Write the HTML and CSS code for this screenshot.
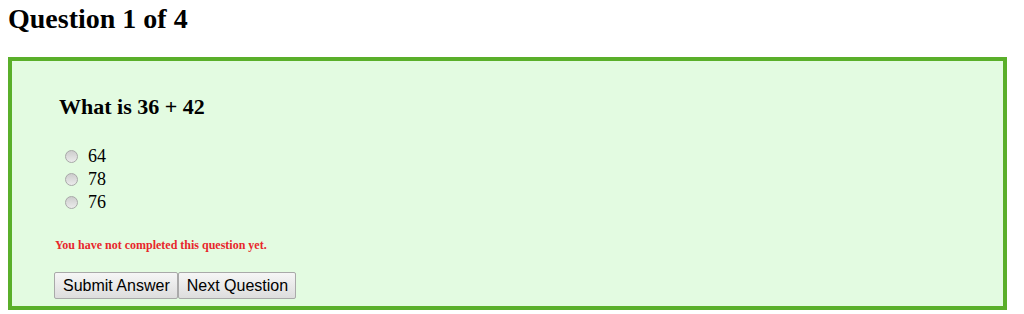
FILE: index.html
```html
<!DOCTYPE html>
<html lang="en">
<head>
    <meta charset="UTF-8">
    <title>Quiz</title>
    <link rel="stylesheet" href="styles.css">
</head>
<body>
    <h1 class="quiz-title">Question 1 of 4</h1>

    <div class="question-box">
        <h3 class="question-text">What is 36 + 42</h3>
        <ul class="answer-list">
            <li><label class="answer-label"><input type="radio" name="answer" value="64"> 64</label></li>
            <li><label class="answer-label"><input type="radio" name="answer" value="78"> 78</label></li>
            <li><label class="answer-label"><input type="radio" name="answer" value="76"> 76</label></li>
        </ul>
        <p class="status-msg">You have not completed this question yet.</p>
        <div class="button-row">
            <button class="quiz-btn">Submit Answer</button><button class="quiz-btn">Next Question</button>
        </div>
    </div>
</body>
</html>
```

FILE: styles.css
```css
body {
    margin: 0 17px 0 8px;
    font-family: "Liberation Serif", "Times New Roman", serif;
    background-color: #FFFFFF;
    color: #000;
}

.quiz-title {
    font-size: 28px;
    font-weight: bold;
    margin: 0;
    padding-top: 1px;
    line-height: 36px;
}

.question-box {
    margin-top: 20px;
    height: 253px;
    box-sizing: border-box;
    border: 4px solid #5AAF2A;
    background-color: #E3FBE1;
    padding: 32px 0 0 42px;
}

.question-text {
    font-size: 22px;
    margin: 0 0 0 5px;
    line-height: 28px;
}

.answer-list {
    list-style: none;
    margin: 24px 0 0 11px;
    padding: 0;
}

.answer-list li {
    height: 23px;
    line-height: 23px;
}

.answer-label {
    font-size: 18px;
    display: flex;
    align-items: center;
}

/* old-style grey radio */
.answer-label input {
    -webkit-appearance: none;
    appearance: none;
    margin: 0 10px 0 0;
    width: 13px;
    height: 13px;
    border-radius: 50%;
    border: 1px solid #A8A8A8;
    background: linear-gradient(#CDCDCD, #EBEBEB);
    box-sizing: border-box;
}

.status-msg {
    color: #E8262B;
    font-size: 12px;
    font-weight: bold;
    margin: 24px 0 0 1px;
}

.button-row {
    margin-top: 19px;
    display: flex;
}

.quiz-btn {
    font-family: "Liberation Sans", Arial, sans-serif;
    font-size: 16px;
    height: 27px;
    padding: 0 7px 0 8px;
    border: 1px solid #A9A9A9;
    border-radius: 2px;
    background: linear-gradient(#F6F6F6, #DDDDDD);
    color: #000;
}
```
